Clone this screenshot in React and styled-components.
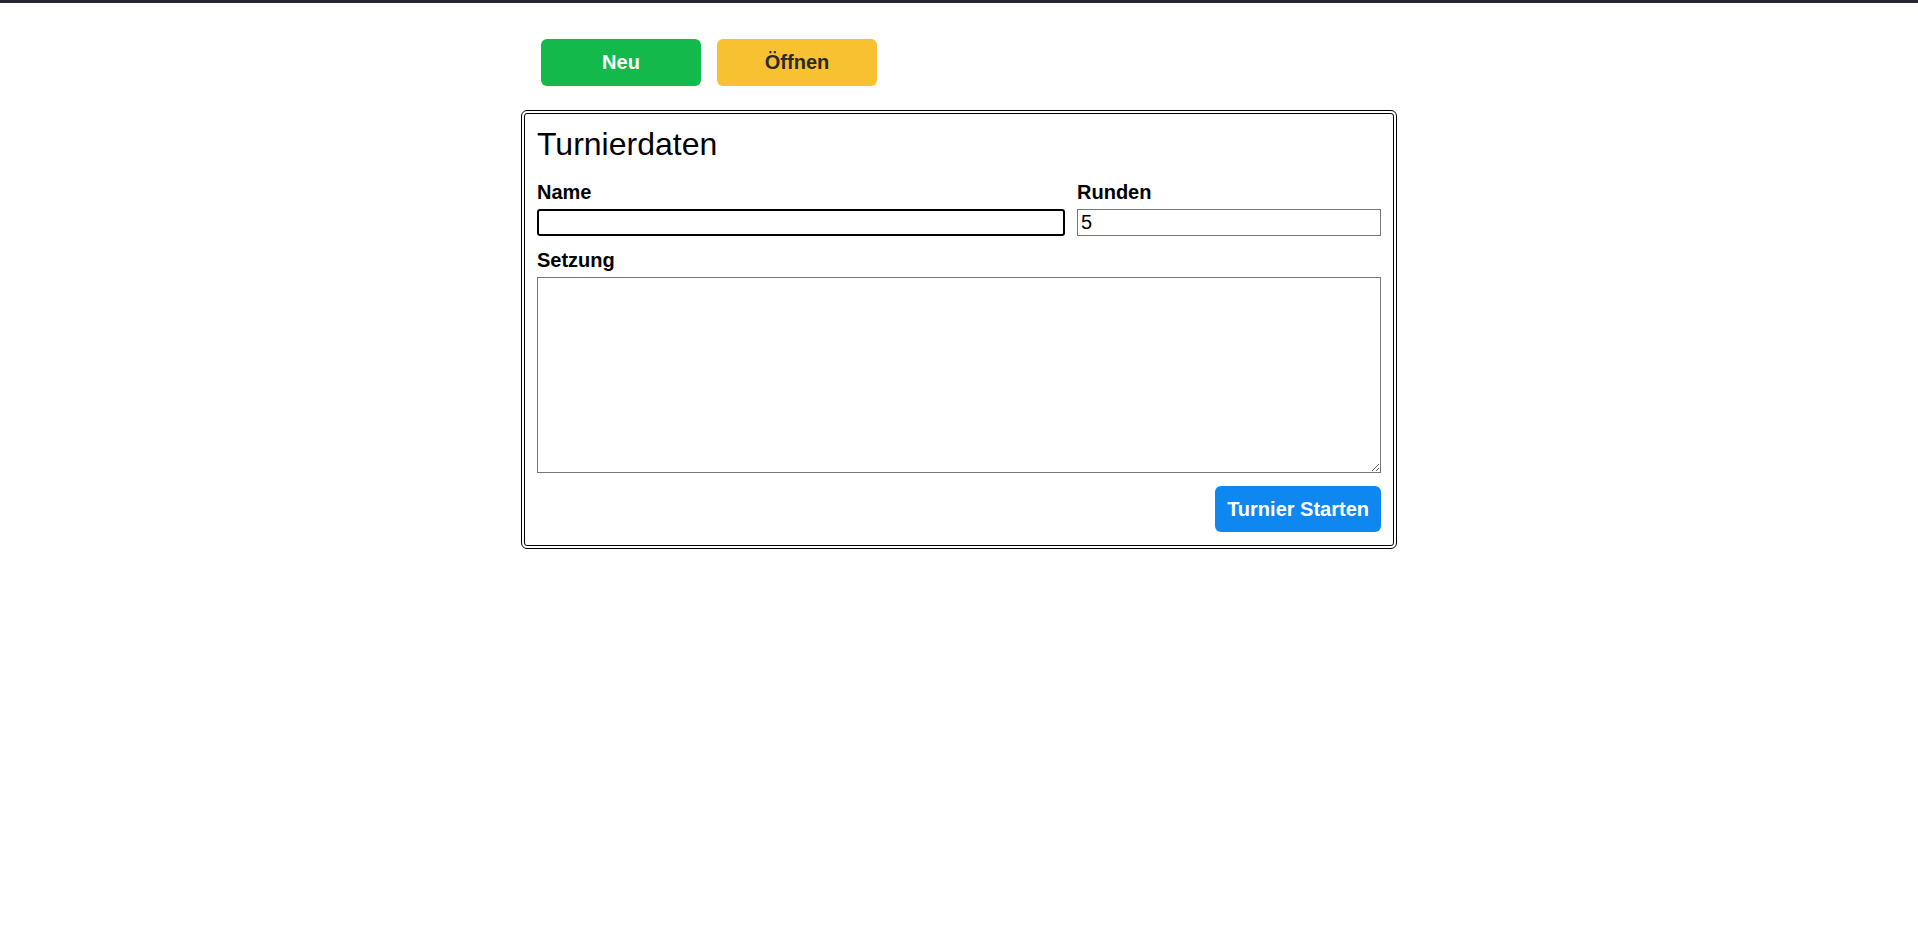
import styled, { createGlobalStyle } from "styled-components"
import { useState } from "react"

const GlobalStyle = createGlobalStyle`
    body {
        margin: 0;
        background: #ffffff;
        font-family: "Liberation Sans", Arial, sans-serif;
        color: #000000;
    }
`

const TopBar = styled.div`
    height: 3px;
    background-color: #262637;
`

const StyledPage = styled.div`
    width: 876px;
    margin: 0 auto;
`

const StyledToolbar = styled.div`
    display: flex;
    gap: 16px;
    padding: 36px 20px 24px;
`

const COLORS = {
    green: { bg: "#13b94b", fg: "#ffffff" },
    yellow: { bg: "#f7c131", fg: "#2b2b2b" },
    blue: { bg: "#0e87f0", fg: "#ffffff" },
}

const StyledButton = styled.button`
    width: ${(props) => props.width || "auto"};
    height: ${(props) => props.height || "46px"};
    padding: 0 12px;
    border: none;
    border-radius: 6px;
    font-family: "Liberation Sans", Arial, sans-serif;
    font-size: 20px;
    font-weight: bold;
    line-height: 23px;
    color: ${(props) => COLORS[props.color].fg};
    background-color: ${(props) => COLORS[props.color].bg};
    cursor: pointer;
`

const StyledCard = styled.div`
    box-sizing: border-box;
    width: 876px;
    border: 4px double #000000;
    border-radius: 6px;
    padding: 12px 12px 13px 12px;
`

const StyledTitle = styled.h1`
    margin: 0 0 19px;
    font-size: 32px;
    font-weight: normal;
    line-height: 36px;
`

const StyledForm = styled.form`
    display: flex;
    flex-direction: column;
    gap: 13px;
`

const StyledRow = styled.div`
    display: grid;
    grid-template-columns: 528px 1fr;
    gap: 12px;
`

const StyledField = styled.div`
    display: flex;
    flex-direction: column;
    gap: 5px;
`

const StyledLabel = styled.label`
    font-size: 20px;
    font-weight: bold;
    line-height: 23px;
`

const StyledInput = styled.input`
    box-sizing: border-box;
    width: 100%;
    height: 27px;
    margin: 0;
    padding: ${(props) => (props.focused ? "0 2px" : "1px 3px")};
    border: ${(props) => (props.focused ? "2px solid #000000" : "1px solid #767676")};
    border-radius: ${(props) => (props.focused ? "3px" : "0")};
    font-family: "Liberation Sans", Arial, sans-serif;
    font-size: 20px;
    line-height: 23px;
    color: #000000;
    outline: none;
`

const StyledTextarea = styled.textarea`
    box-sizing: border-box;
    width: 100%;
    height: 196px;
    margin: 0;
    padding: 2px 3px;
    border: 1px solid #767676;
    font-family: "Liberation Sans", Arial, sans-serif;
    font-size: 20px;
    display: block;
`

const StyledActions = styled.div`
    display: flex;
    justify-content: flex-end;
`

function App() {
    const [name, setName] = useState("")
    const [rounds, setRounds] = useState("5")
    const [seeding, setSeeding] = useState("")

    const onSubmit = (event) => {
        event.preventDefault()
    }

    return (
        <>
            <GlobalStyle />
            <TopBar />
            <StyledPage>
                <StyledToolbar>
                    <StyledButton color="green" width="160px" height="47px">Neu</StyledButton>
                    <StyledButton color="yellow" width="160px" height="47px">Öffnen</StyledButton>
                </StyledToolbar>
                <StyledCard>
                    <StyledTitle>Turnierdaten</StyledTitle>
                    <StyledForm onSubmit={onSubmit}>
                        <StyledRow>
                            <StyledField>
                                <StyledLabel htmlFor="name">Name</StyledLabel>
                                <StyledInput id="name" focused value={name} onChange={(event) => { setName(event.target.value) }} />
                            </StyledField>
                            <StyledField>
                                <StyledLabel htmlFor="rounds">Runden</StyledLabel>
                                <StyledInput id="rounds" value={rounds} onChange={(event) => { setRounds(event.target.value) }} />
                            </StyledField>
                        </StyledRow>
                        <StyledField>
                            <StyledLabel htmlFor="seeding">Setzung</StyledLabel>
                            <StyledTextarea id="seeding" value={seeding} onChange={(event) => { setSeeding(event.target.value) }} />
                        </StyledField>
                        <StyledActions>
                            <StyledButton color="blue" type="submit">Turnier Starten</StyledButton>
                        </StyledActions>
                    </StyledForm>
                </StyledCard>
            </StyledPage>
        </>
    )
}

export default App
